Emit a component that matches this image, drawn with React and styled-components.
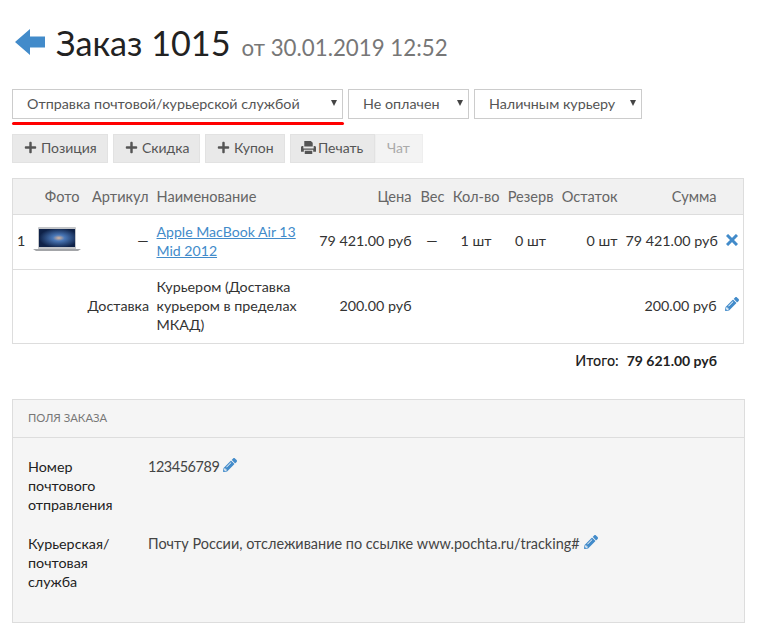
import React from 'react';
import styled, { createGlobalStyle } from 'styled-components';
import { FaPlus, FaPencilAlt } from 'react-icons/fa';

const GlobalStyle = createGlobalStyle`
  html, body {
    margin: 0;
    padding: 0;
    background: #fff;
    overflow: hidden;
  }
  body {
    font-family: Lato, "Noto Sans", sans-serif;
    font-size: 14.3px;
    line-height: 19px;
    color: #333;
  }
`;

const Page = styled.div`
  width: 732px;
  height: 633px;
  padding: 0 14px 0 12px;
`;

const Header = styled.div`
  display: flex;
  align-items: center;
  height: 89px;
`;

const BackIcon = styled.svg`
  width: 30px;
  height: 26px;
  color: #428bca;
  margin: 0 11px 5px 3px;
`;

const Title = styled.h1`
  margin: 0;
  font-size: 34.2px;
  font-weight: 400;
  color: #222;
`;

const Subtitle = styled.small`
  font-size: 22.3px;
  color: #777;
  margin-left: 11px;
`;

const Selects = styled.div`
  display: flex;
  gap: 5px;
  height: 30px;
`;

const SelectBox = styled.div`
  position: relative;
  box-sizing: border-box;
  width: ${props => props.width}px;
  height: 30px;
  padding: 4px 0 0 14px;
  border: 1px solid #ccc;
  color: #555;
  &::after {
    content: '';
    position: absolute;
    right: 5px;
    top: 10px;
    border-left: 3px solid transparent;
    border-right: 3px solid transparent;
    border-top: 6px solid #444;
  }
`;

const RedLine = styled.div`
  width: 332px;
  height: 3px;
  margin-top: 3px;
  background: #f00;
  border-radius: 2px;
`;

const Toolbar = styled.div`
  display: flex;
  gap: 5px;
  margin-top: 9px;
`;

const ButtonGroup = styled.div`
  display: flex;
`;

const Button = styled.div`
  display: flex;
  align-items: center;
  gap: ${props => props.$gap || 4}px;
  box-sizing: border-box;
  width: ${props => props.width}px;
  height: 29px;
  padding: 0 0 2px ${props => props.$left || 11}px;
  font-size: 14px;
  background: ${props => (props.disabled ? '#f3f3f3' : '#e9e9e9')};
  border: 1px solid ${props => (props.disabled ? '#eee' : '#e2e2e2')};
  color: ${props => (props.disabled ? '#aaa' : '#555')};
  svg {
    flex: none;
    width: 13px;
    height: 13px;
    color: #555;
  }
`;

const PrintSvg = styled.svg`
  && {
    width: 15px;
    height: 15px;
  }
`;

const Table = styled.table`
  width: 731px;
  margin-top: 15px;
  border-collapse: collapse;
  table-layout: fixed;
  border: 1px solid #ddd;
`;

const HeadRow = styled.tr`
  height: 36px;
  background: #f1f1f1;
  border-bottom: 1px solid #ddd;
`;

const Row = styled.tr`
  height: ${props => props.height}px;
  border-bottom: 1px solid #ddd;
`;

const Th = styled.th`
  padding: 0 4px;
  font-size: 14.6px;
  font-weight: 400;
  color: #666;
  white-space: nowrap;
  text-align: ${props => props.align || 'right'};
`;

const Td = styled.td`
  padding: 0 4px 3px;
  text-align: ${props => props.align || 'right'};
  white-space: ${props => (props.wrap ? 'normal' : 'nowrap')};
`;

const NameLink = styled.a`
  font-size: 14.1px;
  color: #428bca;
  text-decoration: underline;
`;

const Total = styled.div`
  display: flex;
  justify-content: flex-end;
  gap: 8px;
  height: 55px;
  padding: 7px 27px 0 0;
  box-sizing: border-box;
  color: #222;
  font-weight: 500;
`;

const TotalSum = styled.span`
  font-size: 14px;
  font-weight: 700;
`;

const Panel = styled.div`
  box-sizing: border-box;
  width: 733px;
  height: 224px;
  background: #f5f5f5;
  border: 1px solid #ddd;
`;

const PanelTitle = styled.div`
  box-sizing: border-box;
  height: 38px;
  padding: 8px 15px 0;
  font-size: 11.3px;
  color: #777;
  border-bottom: 1px solid #ddd;
`;

const FieldList = styled.div`
  padding: 19px 15px 0;
`;

const Field = styled.div`
  display: grid;
  grid-template-columns: 120px 1fr;
  margin-bottom: 20px;
`;

const FieldLabel = styled.div`
  color: #222;
  width: 95px;
`;

const FieldValue = styled.div`
  display: flex;
  align-items: flex-start;
  gap: 4px;
  font-size: 14.45px;
  letter-spacing: ${props => (props.$tight ? '-0.45px' : '0')};
  color: #444;
`;

const PencilIcon = styled(FaPencilAlt)`
  width: 14px;
  height: 14px;
  color: #428bca;
  margin-top: 1px;
`;

const CloseIcon = styled.svg`
  width: 12px;
  height: 12px;
  color: #428bca;
  display: block;
  margin: 0 0 2px 1px;
`;

function LaptopPicture() {
  return (
    <svg width="48" height="26" viewBox="0 0 48 26">
      <defs>
        <radialGradient id="galaxy" cx="0.55" cy="0.5" r="0.55">
          <stop offset="0" stopColor="#d8b49c" />
          <stop offset="0.3" stopColor="#4a78b8" />
          <stop offset="1" stopColor="#0f2248" />
        </radialGradient>
      </defs>
      <rect x="5" y="1" width="38" height="23" rx="1" fill="#c4c6c9" />
      <rect x="6" y="3" width="36" height="18" fill="url(#galaxy)" />
      <path d="M0 23h48l-3 2H3z" fill="#a3a5a8" />
    </svg>
  );
}

function PrintIcon() {
  return (
    <PrintSvg viewBox="0 0 16 16">
      <path
        fill="currentColor"
        d="M3.500 1h7L12.500 3v4h-9zM0 8c0-.8.7-1.500 1.500-1.500H2.500V9h11V6.500h1c.8 0 1.500.7 1.500 1.500v4.500h-3V10.500H3v2H0zM4 11.500h8V15H4z"
      />
    </PrintSvg>
  );
}

export default function App() {
  return (
    <Page>
      <GlobalStyle />
      <Header>
        <BackIcon viewBox="0 0 30 26">
          <path fill="currentColor" d="M0 13 15 0v7.500h15v11H15V26z" />
        </BackIcon>
        <Title>
          Заказ 1015<Subtitle>от 30.01.2019 12:52</Subtitle>
        </Title>
      </Header>

      <Selects>
        <SelectBox width={331}>Отправка почтовой/курьерской службой</SelectBox>
        <SelectBox width={121}>Не оплачен</SelectBox>
        <SelectBox width={168}>Наличным курьеру</SelectBox>
      </Selects>
      <RedLine />

      <Toolbar>
        <Button width={96}><FaPlus />Позиция</Button>
        <Button width={87}><FaPlus />Скидка</Button>
        <Button width={80}><FaPlus />Купон</Button>
        <ButtonGroup>
          <Button width={85} $gap={2} $left={10}><PrintIcon />Печать</Button>
          <Button width={48} disabled>Чат</Button>
        </ButtonGroup>
      </Toolbar>

      <Table>
        <colgroup>
          <col width="16" />
          <col width="55" />
          <col width="69" />
          <col width="162" />
          <col width="101" />
          <col width="33" />
          <col width="55" />
          <col width="54" />
          <col width="64" />
          <col width="99" />
          <col width="23" />
        </colgroup>
        <thead>
          <HeadRow>
            <Th />
            <Th>Фото</Th>
            <Th>Артикул</Th>
            <Th align="left">Наименование</Th>
            <Th>Цена</Th>
            <Th>Вес</Th>
            <Th>Кол-во</Th>
            <Th>Резерв</Th>
            <Th>Остаток</Th>
            <Th>Сумма</Th>
            <Th />
          </HeadRow>
        </thead>
        <tbody>
          <Row height={55}>
            <Td align="left">1</Td>
            <Td><LaptopPicture /></Td>
            <Td>—</Td>
            <Td align="left" wrap="true"><NameLink>Apple MacBook Air 13 Mid 2012</NameLink></Td>
            <Td>79 421.00 руб</Td>
            <Td align="center">—</Td>
            <Td align="center">1 шт</Td>
            <Td align="center">0 шт</Td>
            <Td>0 шт</Td>
            <Td>79 421.00 руб</Td>
            <Td>
              <CloseIcon viewBox="0 0 12 12">
                <path fill="none" stroke="currentColor" strokeWidth="3" d="M1 1l10 10M11 1 1 11" />
              </CloseIcon>
            </Td>
          </Row>
          <Row height={74}>
            <Td />
            <Td />
            <Td>Доставка</Td>
            <Td align="left" wrap="true">Курьером (Доставка курьером в пределах МКАД)</Td>
            <Td>200.00 руб</Td>
            <Td />
            <Td />
            <Td />
            <Td />
            <Td>200.00 руб</Td>
            <Td><PencilIcon /></Td>
          </Row>
        </tbody>
      </Table>

      <Total>
        <span>Итого:</span>
        <TotalSum>79 621.00 руб</TotalSum>
      </Total>

      <Panel>
        <PanelTitle>ПОЛЯ ЗАКАЗА</PanelTitle>
        <FieldList>
          <Field>
            <FieldLabel>Номер почтового отправления</FieldLabel>
            <FieldValue $tight>123456789<PencilIcon /></FieldValue>
          </Field>
          <Field>
            <FieldLabel>Курьерская/ почтовая служба</FieldLabel>
            <FieldValue>Почту России, отслеживание по ссылке www.pochta.ru/tracking#<PencilIcon /></FieldValue>
          </Field>
        </FieldList>
      </Panel>
    </Page>
  );
}
